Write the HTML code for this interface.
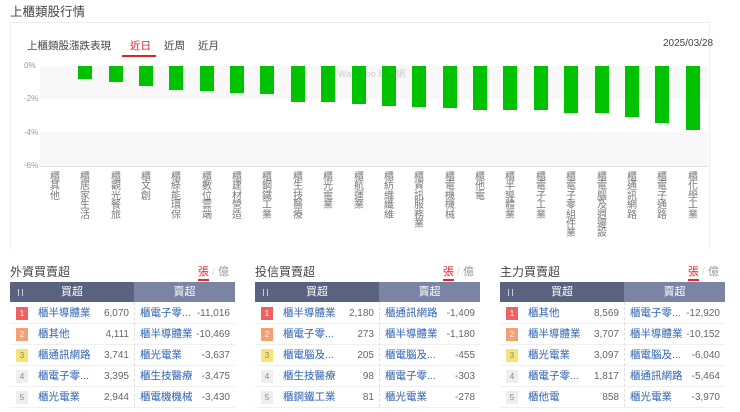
<!DOCTYPE html>
<html><head><meta charset="utf-8"><style>
*{margin:0;padding:0;box-sizing:border-box}
body{width:740px;height:412px;background:#fff;font-family:"Liberation Sans","Noto Sans CJK TC",sans-serif;position:relative;overflow:hidden;color:#333}
.a{position:absolute}
.card{left:10px;top:22px;width:700px;height:228px;border:1px solid #eee;border-bottom:none}
.bar{position:absolute;width:14px;background:#00c200;top:66px}
.lab{position:absolute;top:173px;width:12px;font-size:10px;line-height:9.4px;color:#777;text-align:center;word-break:break-all}
.ytick{position:absolute;left:24px;font-size:8px;color:#999}
.tbl{position:absolute;top:262px;width:225px}
.tt{font-size:12px;color:#444;position:absolute;top:1px;left:0}
.unit{position:absolute;top:1px;right:6px;font-size:11px;color:#999}
.unit b{color:#e23;font-weight:normal;border-bottom:2px solid #e23;padding-bottom:1px}
.hd{position:absolute;top:20px;left:0;width:225px;height:20px;font-size:11px;color:#fff}
.h1{position:absolute;left:0;width:124px;height:20px;background:#59637f;text-align:center;line-height:20px}
.h2{position:absolute;left:124px;width:101px;height:20px;background:#7a84a4;text-align:center;line-height:20px}
.ic{position:absolute;left:8px;top:7px;width:5px;height:7px;border-left:1px solid #ccd;border-right:1px solid #ccd}
.row{position:absolute;left:0;width:225px;height:21px;border-bottom:1px solid #f0f0f0;font-size:10.5px;line-height:21px}
.rk{position:absolute;left:6px;top:4px;width:12px;height:13px;font-size:8px;line-height:13px;text-align:center;color:#fff}
.n1{position:absolute;left:28px;color:#2d62b3}
.v1{position:absolute;right:106px;color:#666;font-size:10px}
.n2{position:absolute;left:130px;color:#2d62b3}
.v2{position:absolute;right:5px;color:#666;font-size:10px}
.sep{position:absolute;left:124px;top:40px;height:105px;border-left:1px dashed #ddd}
</style></head><body>
<div class="a" style="left:10px;top:1px;font-size:12.5px;color:#444">上櫃類股行情</div>
<div class="a card"></div>
<div class="a" style="left:27px;top:38px;font-size:10.5px;color:#444">上櫃類股漲跌表現</div>
<div class="a" style="left:130px;top:38px;font-size:10.5px;color:#d22">近日</div>
<div class="a" style="left:122px;top:55px;width:34px;height:2px;background:#d22"></div>
<div class="a" style="left:164px;top:38px;font-size:10.5px;color:#444">近周</div>
<div class="a" style="left:198px;top:38px;font-size:10.5px;color:#444">近月</div>
<div class="a" style="left:663px;top:38px;font-size:10px;color:#444">2025/03/28</div>
<div class="a" style="left:40px;top:66px;width:668px;height:33px;background:#f8f8f8"></div>
<div class="a" style="left:40px;top:132px;width:668px;height:34px;background:#f8f8f8"></div>
<div class="a" style="left:40px;top:166px;width:668px;height:1px;background:#e2e2e2"></div>
<div class="ytick" style="top:61px">0%</div>
<div class="ytick" style="top:94px">-2%</div>
<div class="ytick" style="top:128px">-4%</div>
<div class="ytick" style="top:161px">-6%</div>
<div class="a" style="left:338px;top:67px;font-size:9px;color:#ccc">WantGoo 玩股網</div>
<div class="bar" style="left:78px;height:13px"></div>
<div class="bar" style="left:109px;height:16px"></div>
<div class="bar" style="left:139px;height:20px"></div>
<div class="bar" style="left:169px;height:24px"></div>
<div class="bar" style="left:200px;height:25px"></div>
<div class="bar" style="left:230px;height:27px"></div>
<div class="bar" style="left:260px;height:28px"></div>
<div class="bar" style="left:291px;height:36px"></div>
<div class="bar" style="left:321px;height:36px"></div>
<div class="bar" style="left:352px;height:38px"></div>
<div class="bar" style="left:382px;height:40px"></div>
<div class="bar" style="left:412px;height:41px"></div>
<div class="bar" style="left:443px;height:42px"></div>
<div class="bar" style="left:473px;height:44px"></div>
<div class="bar" style="left:503px;height:44px"></div>
<div class="bar" style="left:534px;height:44px"></div>
<div class="bar" style="left:564px;height:47px"></div>
<div class="bar" style="left:595px;height:47px"></div>
<div class="bar" style="left:625px;height:51px"></div>
<div class="bar" style="left:655px;height:57px"></div>
<div class="bar" style="left:686px;height:64px"></div>
<div class="lab" style="left:49px">櫃其他</div>
<div class="lab" style="left:79px">櫃居家生活</div>
<div class="lab" style="left:110px">櫃觀光餐旅</div>
<div class="lab" style="left:140px">櫃文創</div>
<div class="lab" style="left:170px">櫃綠能環保</div>
<div class="lab" style="left:201px">櫃數位雲端</div>
<div class="lab" style="left:231px">櫃建材營造</div>
<div class="lab" style="left:261px">櫃鋼鐵工業</div>
<div class="lab" style="left:292px">櫃生技醫療</div>
<div class="lab" style="left:322px">櫃光電業</div>
<div class="lab" style="left:353px">櫃航運業</div>
<div class="lab" style="left:383px">櫃紡織纖維</div>
<div class="lab" style="left:413px">櫃資訊服務業</div>
<div class="lab" style="left:444px">櫃電機機械</div>
<div class="lab" style="left:474px">櫃他電</div>
<div class="lab" style="left:504px">櫃半導體業</div>
<div class="lab" style="left:535px">櫃電子工業</div>
<div class="lab" style="left:565px">櫃電子零組件業</div>
<div class="lab" style="left:596px">櫃電腦及週邊設</div>
<div class="lab" style="left:626px">櫃通訊網路</div>
<div class="lab" style="left:656px">櫃電子通路</div>
<div class="lab" style="left:687px">櫃化學工業</div>

<div class="tbl" style="left:10px">
<div class="tt">外資買賣超</div><div class="unit"><b>張</b> <span style="color:#ddd">/</span> 億</div>
<div class="hd"><div class="h1"><div class="ic"></div>買超</div><div class="h2">賣超</div></div>
<div class="row" style="top:41px"><div class="rk" style="background:#f0625e">1</div><span class="n1">櫃半導體業</span><span class="v1">6,070</span><span class="n2">櫃電子零...</span><span class="v2">-11,016</span></div>
<div class="row" style="top:62px"><div class="rk" style="background:#f5a070">2</div><span class="n1">櫃其他</span><span class="v1">4,111</span><span class="n2">櫃半導體業</span><span class="v2">-10,469</span></div>
<div class="row" style="top:83px"><div class="rk" style="background:#f8e37a;color:#886">3</div><span class="n1">櫃通訊網路</span><span class="v1">3,741</span><span class="n2">櫃光電業</span><span class="v2">-3,637</span></div>
<div class="row" style="top:104px"><div class="rk" style="background:#eee;color:#888">4</div><span class="n1">櫃電子零...</span><span class="v1">3,395</span><span class="n2">櫃生技醫療</span><span class="v2">-3,475</span></div>
<div class="row" style="top:125px"><div class="rk" style="background:#eee;color:#888">5</div><span class="n1">櫃光電業</span><span class="v1">2,944</span><span class="n2">櫃電機機械</span><span class="v2">-3,430</span></div>
<div class="sep"></div>
</div>

<div class="tbl" style="left:255px">
<div class="tt">投信買賣超</div><div class="unit"><b>張</b> <span style="color:#ddd">/</span> 億</div>
<div class="hd"><div class="h1"><div class="ic"></div>買超</div><div class="h2">賣超</div></div>
<div class="row" style="top:41px"><div class="rk" style="background:#f0625e">1</div><span class="n1">櫃半導體業</span><span class="v1">2,180</span><span class="n2">櫃通訊網路</span><span class="v2">-1,409</span></div>
<div class="row" style="top:62px"><div class="rk" style="background:#f5a070">2</div><span class="n1">櫃電子零...</span><span class="v1">273</span><span class="n2">櫃半導體業</span><span class="v2">-1,180</span></div>
<div class="row" style="top:83px"><div class="rk" style="background:#f8e37a;color:#886">3</div><span class="n1">櫃電腦及...</span><span class="v1">205</span><span class="n2">櫃電腦及...</span><span class="v2">-455</span></div>
<div class="row" style="top:104px"><div class="rk" style="background:#eee;color:#888">4</div><span class="n1">櫃生技醫療</span><span class="v1">98</span><span class="n2">櫃電子零...</span><span class="v2">-303</span></div>
<div class="row" style="top:125px"><div class="rk" style="background:#eee;color:#888">5</div><span class="n1">櫃鋼鐵工業</span><span class="v1">81</span><span class="n2">櫃光電業</span><span class="v2">-278</span></div>
<div class="sep"></div>
</div>

<div class="tbl" style="left:500px">
<div class="tt">主力買賣超</div><div class="unit"><b>張</b> <span style="color:#ddd">/</span> 億</div>
<div class="hd"><div class="h1"><div class="ic"></div>買超</div><div class="h2">賣超</div></div>
<div class="row" style="top:41px"><div class="rk" style="background:#f0625e">1</div><span class="n1">櫃其他</span><span class="v1">8,569</span><span class="n2">櫃電子零...</span><span class="v2">-12,920</span></div>
<div class="row" style="top:62px"><div class="rk" style="background:#f5a070">2</div><span class="n1">櫃半導體業</span><span class="v1">3,707</span><span class="n2">櫃半導體業</span><span class="v2">-10,152</span></div>
<div class="row" style="top:83px"><div class="rk" style="background:#f8e37a;color:#886">3</div><span class="n1">櫃光電業</span><span class="v1">3,097</span><span class="n2">櫃電腦及...</span><span class="v2">-6,040</span></div>
<div class="row" style="top:104px"><div class="rk" style="background:#eee;color:#888">4</div><span class="n1">櫃電子零...</span><span class="v1">1,817</span><span class="n2">櫃通訊網路</span><span class="v2">-5,464</span></div>
<div class="row" style="top:125px"><div class="rk" style="background:#eee;color:#888">5</div><span class="n1">櫃他電</span><span class="v1">858</span><span class="n2">櫃光電業</span><span class="v2">-3,970</span></div>
<div class="sep"></div>
</div>
</body></html>
